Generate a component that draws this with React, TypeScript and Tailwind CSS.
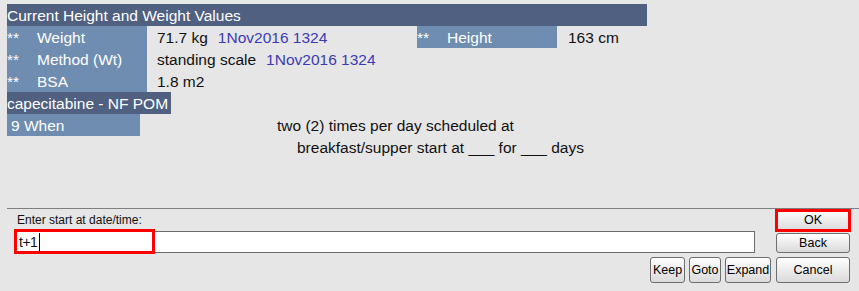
import React from 'react';

const LABEL_BG = 'bg-[#6f8db1]';
const DARK_BG = 'bg-[#4f6081]';

function Label({ text }: { text: string }) {
  return (
    <div className={`w-[140px] shrink-0 flex text-white ${LABEL_BG}`}>
      <span className="w-[30px] shrink-0">**</span>
      <span>{text}</span>
    </div>
  );
}

function Stamp({ children }: { children: React.ReactNode }) {
  return <span className="ml-[10px] text-[#3b3bb6]">{children}</span>;
}

function Btn({ children, className = '' }: { children: React.ReactNode; className?: string }) {
  return (
    <button
      className={`flex items-center justify-center rounded-[3px] border border-[#6e6e6e] bg-gradient-to-b from-white to-[#dadada] text-[12.5px] text-black ${className}`}
    >
      {children}
    </button>
  );
}

export default function App() {
  return (
    <div className="flex h-[291px] w-[859px] flex-col bg-[#e6e6e6] font-['Liberation_Sans',Arial,sans-serif] text-[#111]">
      {/* Values panel */}
      <div className="pl-[7px] pt-[4px] text-[15.5px] leading-[23px]">
        <div className={`h-[22px] w-[640px] text-white ${DARK_BG}`}>Current Height and Weight Values</div>

        <div className="flex h-[22px]">
          <Label text="Weight" />
          <div className="w-[270px] shrink-0 pl-[10px]">
            71.7 kg<Stamp>1Nov2016 1324</Stamp>
          </div>
          <Label text="Height" />
          <div className="pl-[11px]">163 cm</div>
        </div>
        <div className="flex h-[22px]">
          <Label text="Method (Wt)" />
          <div className="pl-[10px]">
            standing scale<Stamp>1Nov2016 1324</Stamp>
          </div>
        </div>
        <div className="flex h-[22px]">
          <Label text="BSA" />
          <div className="pl-[10px]">1.8 m2</div>
        </div>

        <div className={`h-[22px] w-[164px] text-white ${DARK_BG}`}>capecitabine - NF POM</div>

        <div className="flex">
          <div className={`h-[22px] w-[133px] shrink-0 pl-[4px] text-white ${LABEL_BG}`}>9 When</div>
          <div className="ml-[137px] leading-[22px]">
            <div className="h-[22px] pt-px">two (2) times per day scheduled at</div>
            <div className="h-[22px] pl-[20px] pt-px">breakfast/supper start at ___ for ___ days</div>
          </div>
        </div>
      </div>

      <div className="flex-1" />

      {/* Entry area */}
      <div className="ml-[7px] h-[83px] border-t border-[#7f7f7f]">
        <div className="flex">
          <div className="flex flex-1 flex-col">
            <div className="h-[22px] pl-[10px] text-[12px] leading-[22px]">Enter start at date/time:</div>
            <div className="relative ml-[8px] mr-[21px] h-[22px]">
              <div className="flex h-full items-center border-y border-r border-[#6b6b6b] bg-white pl-[4px] text-[14px] tracking-[-0.5px]">
                t+1
                <span className="ml-[2px] h-[18px] w-px bg-black" />
              </div>
              <div className="absolute left-[-1px] top-[-2px] h-[25px] w-[141px] border-[3px] border-[#ff0000]" />
            </div>
            <div className="mt-[4px] flex justify-end gap-[4px] pr-[5px]">
              <Btn className="h-[26px] w-[35px]">Keep</Btn>
              <Btn className="h-[26px] w-[32px]">Goto</Btn>
              <Btn className="h-[26px] w-[46px]">Expand</Btn>
            </div>
          </div>

          <div className="mr-[9px] flex w-[74px] flex-col">
            <div className="relative">
              <Btn className="h-[23px] w-full">OK</Btn>
              <div className="absolute left-[-1px] right-[-1px] top-0 bottom-0 border-[3px] border-[#ff0000]" />
            </div>
            <Btn className="mt-px h-[20px] w-full">Back</Btn>
            <Btn className="mt-[4px] h-[26px] w-full">Cancel</Btn>
          </div>
        </div>
      </div>
    </div>
  );
}
